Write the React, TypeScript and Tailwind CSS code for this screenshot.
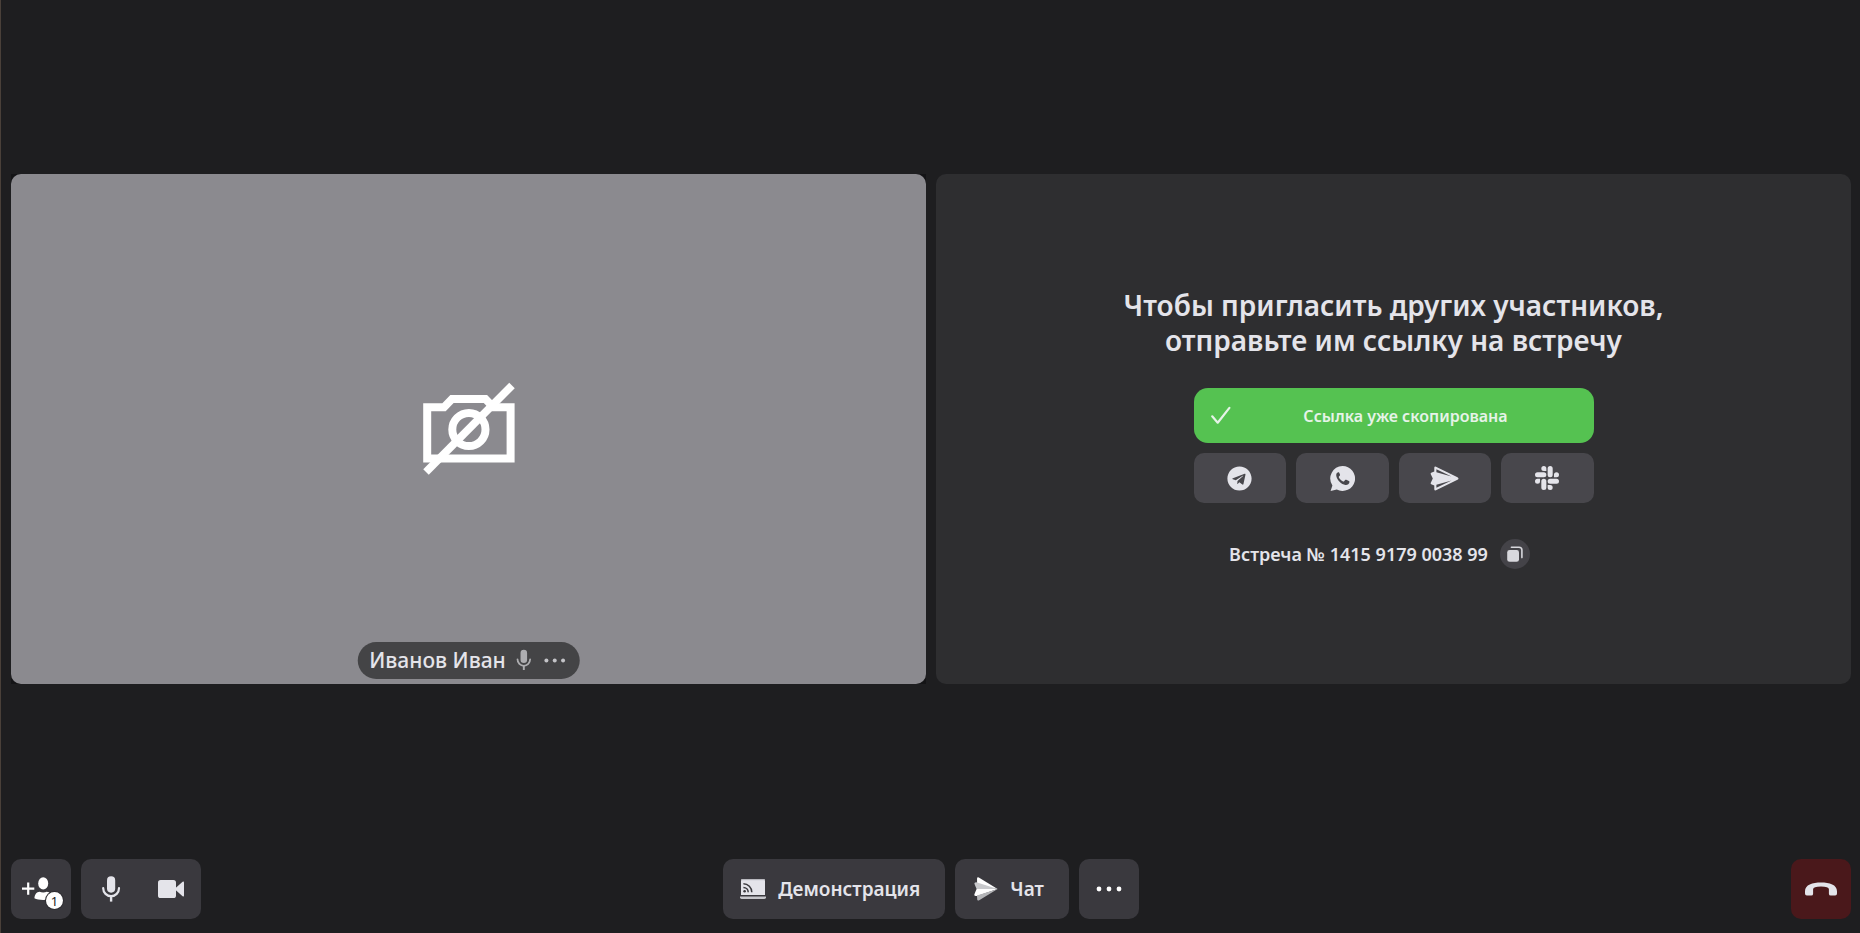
import type { ReactNode } from "react";
import { FaTelegram } from "react-icons/fa";

function MicIcon({ className }: { className: string }) {
  return (
    <svg viewBox="0 0 20 26" className={className} fill="none" aria-hidden="true">
      <rect x="6" y="0.3" width="8.2" height="16.4" rx="4.1" fill="currentColor" />
      <path d="M2.2 12.2a7.9 8 0 0 0 15.8 0" stroke="currentColor" strokeWidth="2.2" strokeLinecap="round" />
      <path d="M10.1 20v5.6" stroke="currentColor" strokeWidth="2.4" />
    </svg>
  );
}

function VideoIcon() {
  return (
    <svg viewBox="0 0 26 18" className="h-[18px] w-[26px]" fill="currentColor" aria-hidden="true">
      <rect width="18" height="18" rx="2.6" />
      <path d="M17.6 8 24.6 1.7Q26 .8 26 2.4v13.2q0 1.6-1.4.7L17.6 10Z" />
    </svg>
  );
}

function InviteIcon() {
  return (
    <svg viewBox="0 0 30 24" className="h-6 w-[30px]" aria-hidden="true">
      <path d="M6.2 5.6v12.2M0 11.7h12.3" stroke="currentColor" strokeWidth="2.2" />
      <ellipse cx="21.2" cy="6.4" rx="5" ry="6.1" fill="currentColor" />
      <path d="M12.4 21.3c.4-4.4 2.3-6.2 5.2-6.6 2 1.1 5.2 1.1 7.2 0 3 .4 5 2.4 5.2 6.6-3.5 2.2-14 2.2-17.6 0Z" fill="currentColor" />
    </svg>
  );
}

function CastIcon() {
  return (
    <svg viewBox="0 0 26 20" className="h-5 w-[26px]" aria-hidden="true">
      <path d="M2.8 0h20.4Q25 0 25 1.8V16H1V1.8Q1 0 2.8 0Z" fill="#e4e4ea" />
      <path d="M1.3.6H24.7" stroke="#b9b9bf" strokeWidth="1.2" />
      <path d="M0 17.6h26v1q0 1.4-1.6 1.4H1.6Q0 20 0 18.6Z" fill="#c6c6cb" />
      <g stroke="#3a393e" strokeWidth="1.5" fill="none">
        <path d="M3.4 8.4a4.8 4.8 0 0 1 4.8 4.8M3.4 4.8a8.4 8.4 0 0 1 8.4 8.4" />
      </g>
      <circle cx="4.6" cy="12.2" r="1.3" fill="#3a393e" />
    </svg>
  );
}

function ChatIcon() {
  return (
    <svg viewBox="0 0 24 24" className="size-6" aria-hidden="true">
      <path d="M4.8.5 23.6 12 3.2 8.6 3 1.6Q3.2-.2 4.8.5Z" fill="#fff" />
      <path d="M3.2 5.4 23.6 12H2.6L.4 6.8Q.2 4.8 3.2 5.4Z" fill="#c8c9cc" />
      <path d="M2.6 12H23.6L3 18.9Q-.4 19.4.5 17Z" fill="#fff" />
      <path d="M3 18.6 23.6 12 4.8 23.4Q3.4 24 3.2 22.4Z" fill="#b4b5b8" />
    </svg>
  );
}

function DotsIcon({ className }: { className: string }) {
  return (
    <svg viewBox="0 0 26 6" className={className} fill="currentColor" aria-hidden="true">
      <circle cx="3" cy="3" r="2.4" />
      <circle cx="13" cy="3" r="2.4" />
      <circle cx="23" cy="3" r="2.4" />
    </svg>
  );
}

function HangUpIcon() {
  return (
    <svg viewBox="0 0 32 14" className="h-3.5 w-8" fill="currentColor" aria-hidden="true">
      <path d="M16 .4C24.5.4 32 2.6 32 9.2v2.4q0 1.8-1.8 1.9l-4.4.1q-1.900 0-1.900-1.900V7.200Q23.800 4.600 16 4.600T8.100 7.200v4.500q0 1.900-1.900 1.900l-4.400-.1Q0 13.400 0 11.600V9.200C0 2.600 7.500.4 16 .4Z" />
    </svg>
  );
}

function CameraOffIcon() {
  return (
    <svg viewBox="0 0 100 100" className="size-[100px]" fill="none" stroke="#fff" strokeWidth="8" role="img" aria-label="Камера выключена">
      <path d="M8.2 28.2H25L33 20H66.400L74.400 28.200H91.600V79.500H8.200Z" />
      <circle cx="49.900" cy="50.500" r="16.600" />
      <path d="M7 93 93 6.400" strokeWidth="7.800" />
    </svg>
  );
}

function WhatsAppIcon() {
  return (
    <svg viewBox="0 0 25 25" className="size-[25px]" aria-hidden="true">
      <path d="M12.500 0a12.500 12.500 0 1 1-5.700 23.600L.6 25l1.800-5.600A12.500 12.500 0 0 1 12.500 0Z" fill="currentColor" />
      <path d="M8.300 6.200c-1.700.4-2.300 1.900-2 3.800.7 4.200 5 8.400 9.200 8.900 1.900.2 3.700-.9 4-2.900.1-.5-.2-.8-.6-1l-2.600-1.200c-.5-.2-.9-.1-1.200.3l-1 1.200c-.3.300-.6.300-1 .1-1.900-.9-3.300-2.300-4.200-4-.2-.4-.1-.7.1-.9l.9-1.100c.2-.3.200-.6.100-.9L9.200 6.700c-.2-.5-.4-.6-.9-.5Z" fill="#48474c" />
    </svg>
  );
}

function MessengerIcon() {
  return (
    <svg viewBox="0 0 29 25" className="h-[25px] w-[29px]" aria-hidden="true">
      <path d="M4.300 1.600Q4.500.2 6 .7L27.500 11.200q2 1.300 0 2.600L6 24.300q-1.500.5-1.700-.9V19.500L1.200 18.300Q.3 17.700.8 16.700L2.800 12.500.8 8.300Q.3 7.300 1.200 6.700L4.300 5.500Z" fill="currentColor" />
      <path d="M6.400 3.300 21.500 10.600 6.400 6.200ZM6.400 21.700 21.500 14.400 6.400 18.800Z" fill="#48474c" />
    </svg>
  );
}

function SlackIcon() {
  return (
    <svg viewBox="0 0 24 24" className="size-6" fill="currentColor" aria-hidden="true">
      <path d="M5.042 15.165a2.528 2.528 0 0 1-2.520 2.523A2.528 2.528 0 0 1 0 15.165a2.527 2.527 0 0 1 2.522-2.520h2.520v2.520zM6.313 15.165a2.527 2.527 0 0 1 2.521-2.520 2.527 2.527 0 0 1 2.521 2.520v6.313A2.528 2.528 0 0 1 8.834 24a2.528 2.528 0 0 1-2.521-2.522v-6.313zM8.834 5.042a2.528 2.528 0 0 1-2.521-2.520A2.528 2.528 0 0 1 8.834 0a2.528 2.528 0 0 1 2.521 2.522v2.520H8.834zM8.834 6.313a2.528 2.528 0 0 1 2.521 2.521 2.528 2.528 0 0 1-2.521 2.521H2.522A2.528 2.528 0 0 1 0 8.834a2.528 2.528 0 0 1 2.522-2.521h6.312zM18.956 8.834a2.528 2.528 0 0 1 2.522-2.521A2.528 2.528 0 0 1 24 8.834a2.528 2.528 0 0 1-2.522 2.521h-2.522V8.834zM17.688 8.834a2.528 2.528 0 0 1-2.523 2.521 2.527 2.527 0 0 1-2.520-2.521V2.522A2.527 2.527 0 0 1 15.165 0a2.528 2.528 0 0 1 2.523 2.522v6.312zM15.165 18.956a2.528 2.528 0 0 1 2.523 2.522A2.528 2.528 0 0 1 15.165 24a2.527 2.527 0 0 1-2.520-2.522v-2.522h2.520zM15.165 17.688a2.527 2.527 0 0 1-2.520-2.523 2.526 2.526 0 0 1 2.520-2.520h6.313A2.527 2.527 0 0 1 24 15.165a2.528 2.528 0 0 1-2.522 2.523h-6.313z" />
    </svg>
  );
}

function CopyIcon() {
  return (
    <svg viewBox="0 0 16 16" className="size-4" fill="none" aria-hidden="true">
      <rect x="0.2" y="4" width="11.8" height="11.8" rx="2.4" fill="currentColor" />
      <path d="M4.400 1.200h7.600q2.900 0 2.900 2.900v7.500" stroke="currentColor" strokeWidth="1.6" strokeLinecap="round" />
    </svg>
  );
}

function ShareButton({ label, children }: { label: string; children: ReactNode }) {
  return (
    <button type="button" aria-label={label} className="flex h-[50px] items-center justify-center rounded-[10px] bg-[#48474c] text-[#e4e4ea]">
      {children}
    </button>
  );
}

export default function App() {
  return (
    <div className="flex min-h-screen flex-col border-l border-[#4a4039] bg-[#1e1e20] pr-[9px] pb-3.5 pl-2.5 font-['Noto_Sans','Open_Sans',sans-serif] text-[#e4e4ea]">
      <main className="grid flex-1 grid-cols-2 content-center gap-2.5 pb-0.5">
        <section aria-label="Иванов Иван" className="flex aspect-[915/510] bg-[#141416]">
          <div className="relative flex flex-1 items-center justify-center rounded-[10px] bg-[#8b8a8f]">
            <CameraOffIcon />
            <div className="absolute bottom-[5px] left-1/2 flex h-[37px] -translate-x-1/2 items-center rounded-full bg-[#444446] pr-3.5 pl-3">
              <span className="text-[21px] leading-7 font-medium whitespace-nowrap">Иванов Иван</span>
              <MicIcon className="ml-2.5 h-[22px] w-4 text-[#adadb0]" />
              <button type="button" aria-label="Действия с участником" className="ml-3 text-[#c4c4c8]">
                <DotsIcon className="h-[5px] w-[22px]" />
              </button>
            </div>
          </div>
        </section>

        <section aria-label="Приглашение" className="flex aspect-[915/510] flex-col items-center justify-center rounded-[10px] bg-[#2e2e30]">
          <h1 className="text-center text-[28px] leading-[35px] font-semibold">
            Чтобы пригласить других участников,
            <br />
            отправьте им ссылку на встречу
          </h1>
          <div className="mt-[30px] flex w-[400px] flex-col gap-2.5">
            <button type="button" className="flex h-[55px] items-center rounded-[14px] bg-[#55c251] px-4 text-[#e6f3e8]">
              <svg viewBox="0 0 24 24" className="size-6" fill="none" aria-hidden="true">
                <path d="M2.200 12.300 7.700 18.700 19.400 3.900" stroke="currentColor" strokeWidth="2.200" strokeLinecap="round" strokeLinejoin="round" />
              </svg>
              <span className="flex-1 text-[16px] leading-6 font-semibold">Ссылка уже скопирована</span>
            </button>
            <div className="grid grid-cols-4 gap-2.5">
              <ShareButton label="Telegram"><FaTelegram className="size-[25px]" /></ShareButton>
              <ShareButton label="WhatsApp"><WhatsAppIcon /></ShareButton>
              <ShareButton label="Мессенджер"><MessengerIcon /></ShareButton>
              <ShareButton label="Slack"><SlackIcon /></ShareButton>
            </div>
          </div>
          <div className="mt-9 flex items-center gap-3 pr-7">
            <span className="text-[18px] leading-6 font-semibold">Встреча № 1415 9179 0038 99</span>
            <button type="button" aria-label="Скопировать номер" className="flex size-[30px] items-center justify-center rounded-full bg-[#444348] text-[#d8d8dd]">
              <CopyIcon />
            </button>
          </div>
        </section>
      </main>

      <footer className="grid grid-cols-[1fr_auto_1fr] items-center">
        <div className="flex gap-2.5">
          <button type="button" aria-label="Участники" className="relative flex size-[60px] items-center justify-center rounded-[10px] bg-[#3a393e] pr-2 text-white">
            <InviteIcon />
            <span className="absolute right-2 bottom-2.5 flex size-[17px] items-center justify-center rounded-full bg-white text-[13px] leading-4 text-[#222] ring-1 ring-[#2e2d31]">1</span>
          </button>
          <div className="flex rounded-[10px] bg-[#3a393e]">
            <button type="button" aria-label="Микрофон" className="flex size-[60px] items-center justify-center">
              <MicIcon className="h-[26px] w-5" />
            </button>
            <button type="button" aria-label="Камера" className="flex size-[60px] items-center justify-center">
              <VideoIcon />
            </button>
          </div>
        </div>
        <div className="flex gap-2.5">
          <button type="button" className="flex h-[60px] items-center gap-3 rounded-[10px] bg-[#3a393e] pr-[25px] pl-[17px] text-[19px] font-semibold">
            <CastIcon />
            Демонстрация
          </button>
          <button type="button" className="flex h-[60px] items-center gap-3 rounded-[10px] bg-[#3a393e] pr-[25px] pl-[19px] text-[19px] font-semibold">
            <ChatIcon />
            Чат
          </button>
          <button type="button" aria-label="Ещё" className="flex size-[60px] items-center justify-center rounded-[10px] bg-[#3a393e] text-white">
            <DotsIcon className="h-1.5 w-[26px]" />
          </button>
        </div>
        <button type="button" aria-label="Завершить" className="flex size-[60px] items-center justify-center justify-self-end rounded-[10px] bg-[#4a181b]">
          <HangUpIcon />
        </button>
      </footer>
    </div>
  );
}
